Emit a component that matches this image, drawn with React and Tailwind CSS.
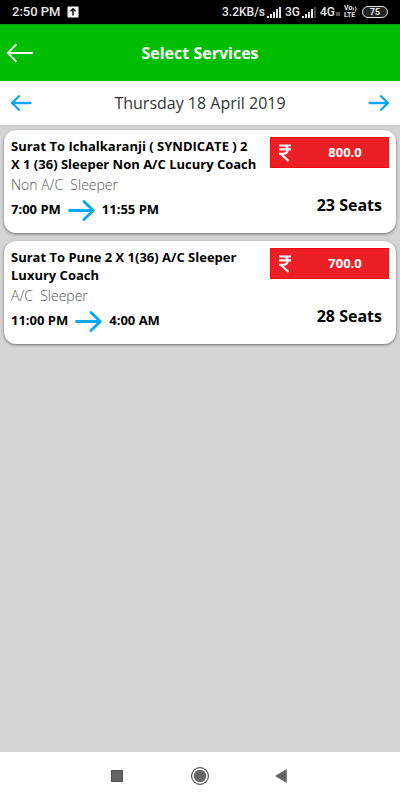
const services = [
  {
    id: 1,
    name: 'Surat To Ichalkaranji ( SYNDICATE ) 2 X 1 (36) Sleeper Non A/C Lucury Coach',
    type: 'Non A/C  Sleeper',
    departure: '7:00 PM',
    arrival: '11:55 PM',
    fare: '800.0',
    seats: 23
  },
  {
    id: 2,
    name: 'Surat To Pune 2 X 1(36) A/C Sleeper Luxury Coach',
    type: 'A/C  Sleeper',
    departure: '11:00 PM',
    arrival: '4:00 AM',
    fare: '700.0',
    seats: 28
  }
];

function SignalBars({ weak }) {
  return <svg className="w-4 h-3 shrink-0" viewBox="0 0 16 12" fill="#e6e6e6" aria-hidden="true">
      <rect x="0" y="10" width="2" height="2" />
      <rect x="3" y="8" width="2" height="4" />
      <rect x="6" y="6" width="2" height="6" />
      <rect x="9" y="3" width="2" height="9" />
      <rect x="12" y="1" width="2" height="11" fill={weak ? '#444' : '#e6e6e6'} />
    </svg>;
}

function StatusBar() {
  return <div className="h-6 bg-black text-[#e6e6e6] flex items-center pl-3 pr-3 font-['Roboto',sans-serif] text-xs font-medium whitespace-nowrap">
      <span className="text-[13px]">2:50 PM</span>
      <svg className="w-3 h-3 ml-1.5" viewBox="0 0 12 12" aria-hidden="true">
        <rect x="0.5" y="0.5" width="11" height="11" rx="1" fill="#fff" />
        <path d="M6 9.5V3M3.5 5.3L6 2.8l2.5 2.5" fill="none" stroke="#000" strokeWidth="1.4" />
      </svg>
      <div className="ml-auto flex items-center">
        <span>3.2KB/s</span>
        <span className="ml-0.5"><SignalBars /></span>
        <span className="ml-0.5">3G</span>
        <span className="ml-0.5"><SignalBars weak /></span>
        <span className="ml-0.5">4G</span>
        <span className="ml-px mt-1 w-1 h-1 bg-[#555]" />
        <span className="ml-1 w-[14px] flex flex-col text-[7px] leading-[7px] font-bold">
          <span className="h-[7px] flex items-center">
            Vo
            <svg className="w-[5px] h-[6px]" viewBox="0 0 5 6" fill="none" stroke="#e6e6e6" aria-hidden="true">
              <path d="M1 1.5q1 1.5 0 3M3.3 0.5q1.6 2.5 0 5" />
            </svg>
          </span>
          <span className="h-[7px]">LTE</span>
        </span>
        <span className="ml-1 w-[26px] h-3 rounded-full border border-[#e6e6e6] bg-[#222] text-[9px] leading-[10px] font-bold text-center">75</span>
      </div>
    </div>;
}

function DateArrow({ back }) {
  return <svg className={back ? 'w-[22px] h-4 rotate-180' : 'w-[22px] h-4'} viewBox="0 0 22 16" fill="none" stroke="#0ba5f2" strokeWidth="2.3" strokeLinecap="round" strokeLinejoin="round" aria-hidden="true">
      <path d="M1.5 8H20M13 1.2L20 8l-7 6.8" />
    </svg>;
}

function ServiceCard({ service }) {
  return <article className="bg-white rounded-xl shadow-[0_1px_3px_rgba(0,0,0,0.5)] min-h-[103px] px-[7px] pt-[7px] flex justify-between">
      <div className="w-[247px] shrink-0">
        <h2 className="text-[13px] leading-[18px] font-bold">{service.name}</h2>
        <p className="mt-0.5 text-sm leading-5 font-light text-[#555] whitespace-pre">{service.type}</p>
        <div className="h-[30px] flex items-center gap-[7px] text-[13px] font-bold">
          <span>{service.departure}</span>
          <svg className="w-[27px] h-[21px]" viewBox="0 0 27 21" fill="none" stroke="#03a9f4" strokeWidth="2.8" strokeLinecap="round" strokeLinejoin="round" aria-label="to">
            <path d="M1.5 10.5H25M16 1.5l9.3 9L16 19.5" />
          </svg>
          <span>{service.arrival}</span>
        </div>
      </div>
      <div className="w-[119px] flex flex-col items-end">
        <button type="button" className="w-full h-[31px] bg-[#ec1f27] border border-[#f00c12] text-white flex items-center pl-2">
          <svg className="w-3 h-[18px] shrink-0" viewBox="0 0 12 18" fill="none" stroke="#fff" strokeWidth="2.2" aria-label="Rupees">
            <path d="M0 1.5h12M0 5.3h12M0 9.8h4C7 9.8 8.6 8.2 8.6 5.5S7 1.5 4 1.5M1.8 9.8L9.5 17" />
          </svg>
          <span className="flex-1 pl-[11px] text-[13px] font-bold">{service.fare}</span>
        </button>
        <p className="mt-[25px] mr-[7px] text-base leading-6 font-bold">{service.seats} Seats</p>
      </div>
    </article>;
}

function NavigationBar() {
  return <nav className="h-12 bg-white flex items-center justify-center gap-[59px]">
      <button type="button" aria-label="Recent apps" className="w-6 h-6">
        <svg viewBox="0 0 24 24"><rect x="6.5" y="6.5" width="11" height="11" fill="#666" stroke="#555" /></svg>
      </button>
      <button type="button" aria-label="Home" className="w-6 h-6">
        <svg viewBox="0 0 24 24">
          <circle cx="12" cy="12" r="8.4" fill="none" stroke="#333" />
          <circle cx="12" cy="12" r="6.2" fill="#666" />
        </svg>
      </button>
      <button type="button" aria-label="Back" className="w-6 h-6">
        <svg viewBox="0 0 24 24"><path d="M4.5 12l11-6.5v13z" fill="#666" stroke="#555" strokeWidth="0.5" /></svg>
      </button>
    </nav>;
}

export default function App() {
  return <div className="min-h-screen flex flex-col bg-[#d5d5d5] text-black font-['Open_Sans',sans-serif]">
      <StatusBar />
      <header className="h-[57px] bg-[#02be03] border-t border-[#0a9a0c] text-white grid grid-cols-[40px_1fr_40px] items-center">
        <button type="button" aria-label="Back" className="pl-1.5">
          <svg className="w-7 h-5" viewBox="0 0 28 20" fill="none" stroke="#fff" strokeWidth="1.8">
            <path d="M27 10H1.8M10.5 1.2L1.8 10l8.7 8.8" />
          </svg>
        </button>
        <h1 className="text-center text-base font-bold">Select Services</h1>
      </header>
      <div className="h-[45px] bg-white flex items-center justify-between px-2.5 border-b border-[#c8c8c8]">
        <button type="button" aria-label="Previous day"><DateArrow back /></button>
        <p className="text-base text-[#333]">Thursday 18 April 2019</p>
        <button type="button" aria-label="Next day"><DateArrow /></button>
      </div>
      <main className="flex-1 px-1 pt-1 flex flex-col gap-2">
        {services.map(service => <ServiceCard key={service.id} service={service} />)}
      </main>
      <NavigationBar />
    </div>;
}
